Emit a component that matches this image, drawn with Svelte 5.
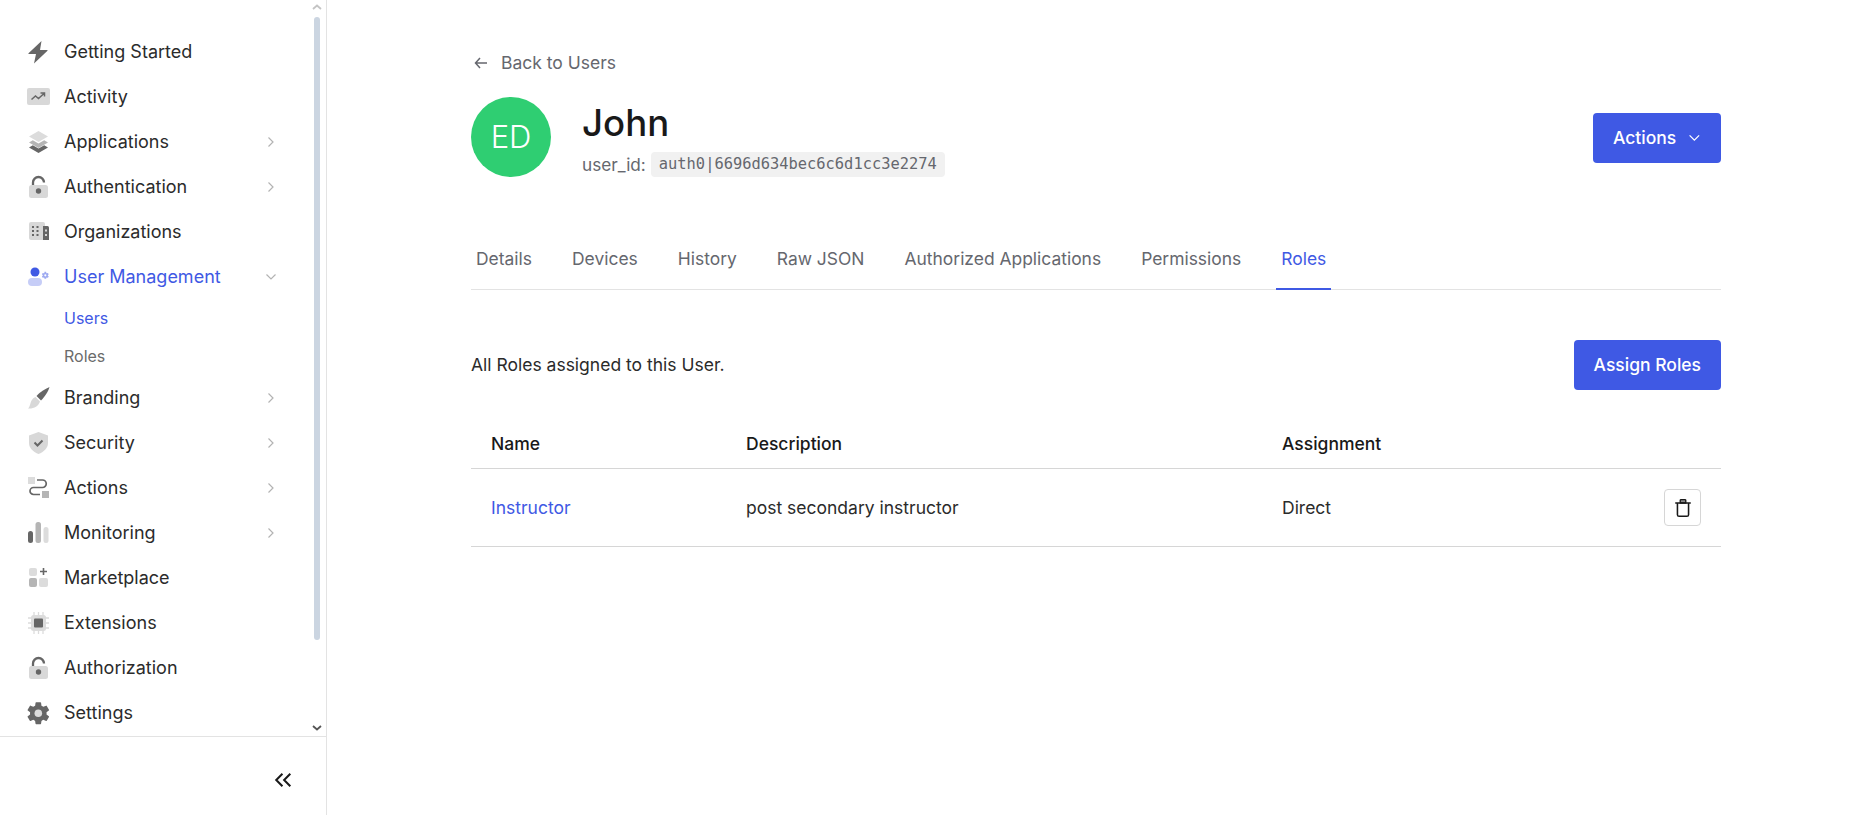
<script>
	const navTop = [
		{ label: 'Getting Started', icon: 'bolt' },
		{ label: 'Activity', icon: 'activity' },
		{ label: 'Applications', icon: 'layers', more: true },
		{ label: 'Authentication', icon: 'lock', more: true },
		{ label: 'Organizations', icon: 'org' }
	];
	const navBottom = [
		{ label: 'Branding', icon: 'brush', more: true },
		{ label: 'Security', icon: 'shield', more: true },
		{ label: 'Actions', icon: 'flow', more: true },
		{ label: 'Monitoring', icon: 'bars', more: true },
		{ label: 'Marketplace', icon: 'market' },
		{ label: 'Extensions', icon: 'chip' },
		{ label: 'Authorization', icon: 'lock' },
		{ label: 'Settings', icon: 'gear' }
	];
	const tabs = ['Details', 'Devices', 'History', 'Raw JSON', 'Authorized Applications', 'Permissions', 'Roles'];
	const gearPath =
		'M19.140 12.940c.04-.3.06-.61.06-.94 0-.32-.02-.64-.07-.94l2.030-1.580a.49.49 0 0 0 .12-.61l-1.920-3.320a.488.488 0 0 0-.59-.22l-2.390.96c-.5-.38-1.030-.7-1.620-.94l-.36-2.540a.484.484 0 0 0-.48-.41h-3.840c-.24 0-.43.17-.47.41l-.36 2.540c-.59.24-1.130.57-1.620.94l-2.390-.96c-.22-.08-.47 0-.59.22L2.740 8.870c-.12.21-.08.47.12.61l2.030 1.580c-.05.3-.09.63-.09.94s.02.64.07.94l-2.030 1.580a.49.49 0 0 0-.12.61l1.920 3.320c.12.22.37.29.59.22l2.390-.96c.5.38 1.030.7 1.620.94l.36 2.540c.05.24.24.41.48.41h3.840c.24 0 .44-.17.47-.41l.36-2.540c.59-.24 1.130-.56 1.620-.94l2.390.96c.22.08.47 0 .59-.22l1.920-3.320c.12-.22.07-.47-.12-.61l-2.010-1.580z';
</script>

{#snippet icon(name)}
	<svg class="nav-icon" viewBox="0 0 24 24" width="24" height="24">
		{#if name === 'bolt'}
			<path d="M15.500 1 2.500 13.200a.5.5 0 0 0 .4.8H10L8 23.500l13.500-12.700a.5.5 0 0 0-.4-.8H14z" fill="#666" />
		{:else if name === 'activity'}
			<rect x="1" y="3" width="23" height="17" rx="2" fill="#d8d8d8" />
			<path d="M5.500 14.500 9.500 11l3 2.500 5.500-5M14.500 8H18.500V11.500" fill="none" stroke="#666" stroke-width="1.500" />
		{:else if name === 'layers'}
			<path d="M12.500 1 22 6.500 12.500 12 3 6.500z" fill="#dcdcdc" />
			<path d="M3 12.500 6.800 10.300l5.700 3.300 5.700-3.300L22 12.500 12.500 18z" fill="#b5b5b5" />
			<path d="M3 17.500 6.800 15.300l5.700 3.300 5.700-3.300L22 17.500 12.500 23z" fill="#666" />
		{:else if name === 'lock'}
			<rect x="3" y="10" width="19" height="13" rx="2.500" fill="#d8d8d8" />
			<path d="M7 10V7.500a5.500 5.500 0 0 1 11 0" fill="none" stroke="#666" stroke-width="2.300" />
			<circle cx="12.500" cy="16" r="2.700" fill="#666" />
		{:else if name === 'org'}
			<rect x="3" y="2" width="16" height="18" rx="2" fill="#d8d8d8" />
			<path d="M17 6h4.500a1.500 1.500 0 0 1 1.500 1.500V20h-6z" fill="#666" />
			<path d="M6 6h2v2H6zM10.500 6h2v2h-2zM6 10h2v2H6zM10.500 10h2v2h-2zM6 14h2v2H6zM10.500 14h2v2h-2z" fill="#666" />
			<path d="M19 9.500h2v2h-2zM19 14h2v2h-2z" fill="#d8d8d8" />
		{:else if name === 'user'}
			<circle cx="9" cy="7" r="4.500" fill="#3f59e4" />
			<rect x="2" y="13" width="14" height="8" rx="4" fill="#c6cdf7" />
			<g transform="translate(15 6) scale(.36)">
				<path d={gearPath} fill="#9eaaf1" />
				<circle cx="12" cy="12" r="3" fill="#fff" />
			</g>
		{:else if name === 'brush'}
			<path d="M23.500 1C20 2.500 14 6 10.500 10l4.500 4.500C19 10.500 22.500 5 23.500 1z" fill="#666" />
			<path d="M9.500 11 14 15.500c-1.500 5-6.500 7.500-12 7 3-2.500 1.500-9 7.500-11.500z" fill="#d8d8d8" />
		{:else if name === 'shield'}
			<path d="M12.500 1 22 4.500V12c0 5.500-4.500 9-9.500 11C7.500 21 3 17.500 3 12V4.500z" fill="#d8d8d8" />
			<path d="M8.500 11.500 11.500 14.500 16.500 9.500" fill="none" stroke="#666" stroke-width="2" />
		{:else if name === 'flow'}
			<rect x="2" y="1" width="7" height="7" fill="#dcdcdc" />
			<rect x="16" y="15" width="7" height="7" fill="#b5b5b5" />
			<path d="M11 4h5.500a3.500 3.500 0 0 1 0 7.500h-9a3.500 3.500 0 0 0 0 7H14" fill="none" stroke="#666" stroke-width="1.700" />
		{:else if name === 'bars'}
			<rect x="2" y="10" width="5" height="12" rx="2.500" fill="#666" />
			<rect x="9.500" y="1" width="5.500" height="21" rx="2.500" fill="#b5b5b5" />
			<rect x="17.500" y="6" width="5" height="16" rx="2.500" fill="#dcdcdc" />
		{:else if name === 'market'}
			<rect x="3" y="2" width="8" height="8" rx="2" fill="#dcdcdc" />
			<rect x="3" y="12" width="8" height="9" rx="2" fill="#b5b5b5" />
			<rect x="13" y="12" width="9" height="9" rx="2" fill="#dcdcdc" />
			<path d="M17.500 2v7M14 5.500h7" stroke="#666" stroke-width="1.600" />
		{:else if name === 'chip'}
			<path d="M8 1v22M12.500 1v22M17 1v22M2 7h21M2 12h21M2 17h21" stroke="#dcdcdc" stroke-width="1.300" />
			<rect x="5" y="4" width="15" height="16" rx="2.500" fill="#dcdcdc" />
			<rect x="8" y="7.500" width="9" height="9" rx="1" fill="#666" />
		{:else if name === 'gear'}
			<g transform="translate(-1.500 -1.500) scale(1.150)">
				<path d={gearPath} fill="#666" />
				<circle cx="12" cy="12" r="3.300" fill="#dcdcdc" />
			</g>
		{/if}
	</svg>
{/snippet}

{#snippet navItem(item)}
	<a class="nav-item" href="#top">
		{@render icon(item.icon)}
		<span class="nav-label">{item.label}</span>
		{#if item.more}
			<svg class="chev" viewBox="0 0 12 12" width="12" height="12"><path d="M3.500 1.500 8 6l-4.500 4.500" /></svg>
		{/if}
	</a>
{/snippet}

<div class="layout">
	<aside class="sidebar">
		<nav class="nav">
			{#each navTop as item}
				{@render navItem(item)}
			{/each}
			<a class="nav-item active" href="#top">
				{@render icon('user')}
				<span class="nav-label">User Management</span>
				<svg class="chev" viewBox="0 0 12 12" width="12" height="12"><path d="M1.500 3.500 6 8l4.500-4.500" /></svg>
			</a>
			<a class="sub-item active" href="#top">Users</a>
			<a class="sub-item" href="#top">Roles</a>
			{#each navBottom as item}
				{@render navItem(item)}
			{/each}
		</nav>
		<div class="scrollbar">
			<svg viewBox="0 0 10 6" width="10" height="6" class="arrow-up"><path d="M1 5 5 1.500 9 5" /></svg>
			<div class="thumb"></div>
			<svg viewBox="0 0 10 6" width="10" height="6" class="arrow-down"><path d="M1 1 5 4.500 9 1" /></svg>
		</div>
		<div class="sidebar-foot">
			<svg viewBox="0 0 16 14" width="18" height="16"><path d="M7.500 1.500 2 7l5.500 5.500M14.500 1.500 9 7l5.500 5.500" /></svg>
		</div>
	</aside>

	<main class="main">
		<a class="back" href="#top">
			<svg viewBox="0 0 16 16" width="16" height="16"><path d="M14 8H2.500M7 3 2.500 8 7 13" /></svg>
			Back to Users
		</a>

		<header class="head">
			<div class="avatar">ED</div>
			<div class="who">
				<h1>John</h1>
				<div class="uid">user_id: <code>auth0|6696d634bec6c6d1cc3e2274</code></div>
			</div>
			<button class="btn actions">
				Actions
				<svg viewBox="0 0 12 12" width="14" height="14"><path d="M1.500 3.500 6 8l4.500-4.500" /></svg>
			</button>
		</header>

		<div class="tabs">
			{#each tabs as tab}
				<span class="tab" class:current={tab === 'Roles'}>{tab}</span>
			{/each}
		</div>

		<div class="intro">
			<p>All Roles assigned to this User.</p>
			<button class="btn">Assign Roles</button>
		</div>

		<table>
			<thead>
				<tr>
					<th class="c-name">Name</th>
					<th class="c-desc">Description</th>
					<th>Assignment</th>
					<th class="c-act"></th>
				</tr>
			</thead>
			<tbody>
				<tr>
					<td><a href="#top">Instructor</a></td>
					<td>post secondary instructor</td>
					<td>Direct</td>
					<td class="c-act">
						<button class="trash" aria-label="Remove role">
							<svg viewBox="0 0 16 18" width="18" height="20">
								<path class="lid" d="M5.500 4.500V2.200a.8.8 0 0 1 .8-.8h3.400a.8.8 0 0 1 .8.8v2.300z" />
								<path d="M1 4.500h14M3 4.500V15a1.500 1.500 0 0 0 1.500 1.500h7A1.500 1.500 0 0 0 13 15V4.500" />
							</svg>
						</button>
					</td>
				</tr>
			</tbody>
		</table>
	</main>
</div>

<style>
	:global(body) {
		margin: 0;
		background: #fff;
		font-family: Inter, 'Liberation Sans', sans-serif;
		color: #191919;
	}

	a {
		text-decoration: none;
		color: inherit;
	}

	.layout {
		display: flex;
		height: 815px;
		overflow: hidden;
	}

	.sidebar {
		position: relative;
		flex: 0 0 326px;
		display: flex;
		flex-direction: column;
		border-right: 1px solid #e3e3e3;
	}

	.nav {
		flex: 0 0 737px;
		box-sizing: border-box;
		padding-top: 29px;
		border-bottom: 1px solid #e3e3e3;
		overflow: hidden;
	}

	.nav-item {
		display: flex;
		align-items: center;
		height: 45px;
		padding-left: 26px;
		font-size: 18px;
		color: #2b2b2b;
	}

	.nav-icon {
		flex: none;
		margin-right: 14px;
	}

	.nav-label {
		flex: 1;
	}

	.chev {
		margin-right: 49px;
	}

	.chev path {
		fill: none;
		stroke: #b3b3b3;
		stroke-width: 1.200;
	}

	.nav-item.active {
		color: #3f59e4;
	}

	.sub-item {
		display: block;
		height: 38px;
		line-height: 39px;
		padding-left: 64px;
		font-size: 16px;
		color: #6b6b6b;
	}

	.sub-item.active {
		color: #3f59e4;
	}

	.scrollbar {
		position: absolute;
		top: 0;
		right: 6px;
		width: 7px;
		height: 737px;
		display: flex;
		flex-direction: column;
		align-items: center;
	}

	.scrollbar svg {
		flex: none;
	}

	.scrollbar path {
		fill: none;
		stroke-width: 1.800;
	}

	.arrow-up {
		margin-top: 4px;
	}

	.arrow-up path {
		stroke: #c4c4c4;
	}

	.arrow-down {
		margin-top: 85px;
	}

	.arrow-down path {
		stroke: #555;
	}

	.thumb {
		flex: none;
		width: 6px;
		height: 623px;
		margin-top: 7px;
		border-radius: 3px;
		background: #cbd5e1;
	}

	.sidebar-foot {
		display: flex;
		justify-content: flex-end;
		padding: 35px 34px 0 0;
	}

	.sidebar-foot path {
		fill: none;
		stroke: #191919;
		stroke-width: 1.800;
	}

	.main {
		flex: none;
		box-sizing: border-box;
		width: 1250px;
		margin-left: 144px;
		padding-top: 52px;
	}

	.back {
		display: inline-flex;
		align-items: center;
		gap: 12px;
		height: 21px;
		margin-left: 2px;
		font-size: 17.500px;
		color: #65676e;
	}

	.back path {
		fill: none;
		stroke: #65676e;
		stroke-width: 1.500;
	}

	.head {
		display: flex;
		align-items: center;
		margin-top: 22px;
		height: 80px;
	}

	.avatar {
		flex: none;
		width: 80px;
		height: 80px;
		border-radius: 50%;
		background: #2fce72;
		color: #fff;
		font-size: 31px;
		font-weight: 300;
		line-height: 80px;
		text-align: center;
	}

	.who {
		flex: 1;
		margin-left: 31px;
	}

	h1 {
		margin: 0;
		font-size: 36.600px;
		font-weight: 500;
		line-height: 52px;
		color: #191919;
	}

	.uid {
		display: flex;
		align-items: center;
		gap: 5px;
		margin-top: 3px;
		font-size: 17.200px;
		color: #65676e;
	}

	code {
		display: block;
		padding: 0 8px;
		height: 25px;
		line-height: 25px;
		border-radius: 4px;
		background: #f1f1f1;
		font-family: 'DejaVu Sans Mono', monospace;
		font-size: 15.400px;
		color: #65676e;
	}

	.btn {
		box-sizing: border-box;
		display: inline-flex;
		align-items: center;
		justify-content: center;
		gap: 12px;
		height: 50px;
		padding: 0 20px;
		border: none;
		border-radius: 4px;
		background: #3f59e4;
		color: #fff;
		font-family: inherit;
		font-size: 17.500px;
		font-weight: 500;
	}

	.btn path {
		fill: none;
		stroke: #fff;
		stroke-width: 1.200;
	}

	.actions {
		width: 128px;
		align-self: flex-start;
		margin-top: 16px;
	}

	.tabs {
		display: flex;
		gap: 30px;
		margin-top: 46px;
		height: 67px;
		border-bottom: 1px solid #e3e3e3;
		box-sizing: border-box;
	}

	.tab {
		box-sizing: border-box;
		height: 67px;
		padding: 0 5px;
		line-height: 71px;
		font-size: 17.450px;
		color: #65676e;
	}

	.tab.current {
		color: #3f59e4;
		border-bottom: 2px solid #3f59e4;
	}

	.intro {
		display: flex;
		align-items: flex-start;
		justify-content: space-between;
		margin-top: 50px;
	}

	.intro p {
		margin: 14px 0 0;
		font-size: 17.500px;
		line-height: 22px;
		color: #2b2b2b;
	}

	table {
		width: 100%;
		margin-top: 26px;
		border-collapse: collapse;
		table-layout: fixed;
		font-size: 17.500px;
	}

	th {
		height: 53px;
		padding: 4px 0 0;
		box-sizing: border-box;
		text-align: left;
		font-weight: 500;
		color: #191919;
		border-bottom: 1px solid #d6d6d6;
	}

	td {
		height: 77px;
		padding: 0;
		color: #2b2b2b;
		border-bottom: 1px solid #d6d6d6;
	}

	td a {
		color: #3f59e4;
	}

	th:first-child,
	td:first-child {
		padding-left: 20px;
		width: 275px;
		box-sizing: border-box;
	}

	.c-desc {
		width: 536px;
	}

	.c-act {
		width: 100px;
		text-align: right;
		padding-right: 20px;
		box-sizing: border-box;
	}

	.trash {
		display: inline-flex;
		align-items: center;
		justify-content: center;
		box-sizing: border-box;
		width: 37px;
		height: 37px;
		padding: 0;
		background: #fff;
		border: 1px solid #d6d6d6;
		border-radius: 4px;
		vertical-align: middle;
	}

	.trash path {
		fill: none;
		stroke: #191919;
		stroke-width: 1.400;
	}

	.trash path.lid {
		fill: #8a8a8a;
		stroke-width: 1.200;
	}
</style>
